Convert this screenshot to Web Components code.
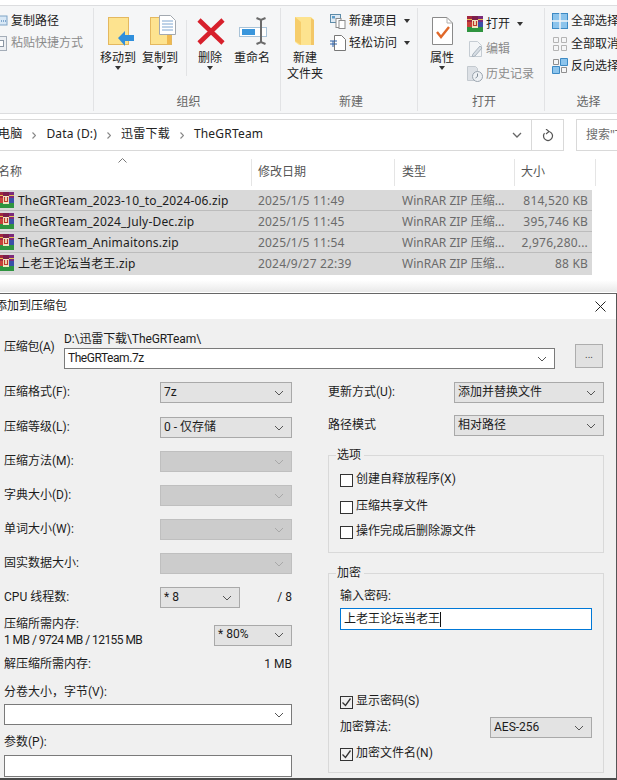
<!DOCTYPE html>
<html lang="zh">
<head>
<meta charset="utf-8">
<title>添加到压缩包</title>
<style>
  html, body { margin: 0; height: 780px; overflow: hidden; background: #fff; }
  body { font: 12px/16px "Noto Sans", "Noto Sans CJK SC", sans-serif; color: #1c1c1c; }
</style>
</head>
<body>
<explorer-ribbon></explorer-ribbon>
<address-bar></address-bar>
<file-list></file-list>
<rar-dialog></rar-dialog>

<script>
const RAR_ICON = /*html*/`
  <svg viewBox="0 0 16 16" width="16" height="16">
    <rect x="0" y="0" width="6" height="6" fill="#a3263f"/>
    <rect x="10" y="0" width="6" height="6" fill="#7b2a7c"/>
    <rect x="5" y="0" width="6" height="4" fill="#7c1f4a"/>
    <rect x="0" y="6" width="5" height="5" fill="#c8413a"/>
    <rect x="11" y="6" width="5" height="5" fill="#3b4fa8"/>
    <rect x="0" y="11" width="16" height="5" fill="#2f9440"/>
    <rect x="5" y="4" width="6" height="8" fill="#f1e4c0"/>
    <path d="M6.5 5v4.5h3V5" fill="none" stroke="#c0392b" stroke-width="1.2"/>
    <rect x="0" y="3" width="5" height="1" fill="#e6c04d"/>
    <rect x="11" y="3" width="5" height="1" fill="#e6c04d"/>
  </svg>`

class RibbonBig extends HTMLElement {
  constructor() {
    super()
    this.shadow = this.attachShadow({ mode: 'open' })
  }

  connectedCallback() {
    this.shadow.innerHTML = /*html*/`
      <style>
        :host { display: flex; flex-direction: column; align-items: center; padding-top: 7px; text-align: center; color: #222; }
        ::slotted(svg) { display: block; height: 31px; margin-bottom: 4px; }
        .caret { width: 0; height: 0; border: 3.5px solid transparent; border-top: 4px solid #333; border-bottom: 0; }
      </style>
      <slot name="icon"></slot>
      <div><slot></slot></div>
      ${this.hasAttribute('caret') ? '<div class="caret"></div>' : ''}
    `
  }
}
customElements.define('ribbon-big', RibbonBig)

class RibbonSmall extends HTMLElement {
  constructor() {
    super()
    this.shadow = this.attachShadow({ mode: 'open' })
  }

  connectedCallback() {
    this.shadow.innerHTML = /*html*/`
      <style>
        :host { display: flex; align-items: center; gap: 3px; white-space: nowrap; color: #222; height: var(--row, 22px); }
        :host([muted]) { color: #8b8b8b; }
        ::slotted(svg) { display: block; flex: none; }
        .caret { width: 0; height: 0; margin-left: 4px; border: 3.5px solid transparent; border-top: 4px solid #333; border-bottom: 0; }
      </style>
      <slot name="icon"></slot>
      <span><slot></slot></span>
      ${this.hasAttribute('caret') ? '<div class="caret"></div>' : ''}
    `
  }
}
customElements.define('ribbon-small', RibbonSmall)

class RibbonGroup extends HTMLElement {
  constructor() {
    super()
    this.shadow = this.attachShadow({ mode: 'open' })
  }

  connectedCallback() {
    this.shadow.innerHTML = /*html*/`
      <style>
        :host { display: flex; flex-direction: column; box-sizing: border-box; margin: 2px 0; border-right: 1px solid #e2e3e5; flex: none; overflow: hidden; }
        .body { display: flex; flex: 1; }
        .label { text-align: center; color: #666; padding-bottom: 1px; min-height: 16px; }
      </style>
      <div class="body"><slot></slot></div>
      <div class="label">${this.getAttribute('label') || ''}</div>
    `
  }
}
customElements.define('ribbon-group', RibbonGroup)

class ExplorerRibbon extends HTMLElement {
  constructor() {
    super()
    this.shadow = this.attachShadow({ mode: 'open' })
  }

  connectedCallback() {
    this.shadow.innerHTML = /*html*/`
      <style>
        :host { display: block; box-sizing: border-box; height: 114px; padding-top: 5px; }
        .bar { display: flex; height: 109px; box-sizing: border-box; background: #f5f6f7; border: solid #dcdddf; border-width: 1px 0; overflow: hidden; }
        .g1 { width: 94px; }
        .g2 { width: 187px; }
        .g3 { width: 137px; }
        .g4 { width: 127px; }
        .g5 { width: 80px; border-right: 0; }
        .rows { display: flex; flex-direction: column; }
        .g1 .rows, .g3 .rows, .g5 .rows { padding-top: 2px; }
        .sep { width: 1px; height: 56px; margin: 12px 5px 0; background: #e2e3e5; }
      </style>
      <div class="bar">
        <ribbon-group class="g1" label="">
          <div class="rows">
            <ribbon-small>
              <svg slot="icon" viewBox="0 0 8 16" width="8" height="16"><rect x="-6" y="3" width="13" height="9" fill="#d8e8f6" stroke="#7fa3c6"/><path d="M1 8h1M3 8h1M5 8h1" stroke="#2c6aa8"/></svg>
              复制路径
            </ribbon-small>
            <ribbon-small muted>
              <svg slot="icon" viewBox="0 0 8 16" width="8" height="16"><rect x="-6" y="1.5" width="12.5" height="14" fill="#eceff3" stroke="#a4adb8"/><rect x="-2" y="5.5" width="5.5" height="6" fill="#fff" stroke="#8a96a4"/></svg>
              粘贴快捷方式
            </ribbon-small>
          </div>
        </ribbon-group>

        <ribbon-group class="g2" label="组织" style="padding-left:3px">
          <ribbon-big caret style="width:42px">
            <svg slot="icon" viewBox="97 13 42 31" width="42">
              <rect x="108.5" y="15.5" width="20" height="27" fill="#fde38f" stroke="#e4b85f"/>
              <path d="M118 36l7-7v4h9v6h-9v5z" fill="#2f8fdc"/>
            </svg>
            移动到
          </ribbon-big>
          <ribbon-big caret style="width:42px">
            <svg slot="icon" viewBox="139 13 42 31" width="42">
              <rect x="150.5" y="15.5" width="21" height="27" fill="#fde38f" stroke="#e4b85f"/>
              <rect x="167" y="32" width="4" height="10" fill="#f0b94f"/>
              <path d="M159.5 13.5h11l5 5v14h-16z" fill="#fff" stroke="#a3a9b0"/>
              <path d="M162 19h11M162 22h11M162 25h11M162 28h11" stroke="#7ea6d0"/>
            </svg>
            复制到
          </ribbon-big>
          <div class="sep"></div>
          <ribbon-big caret style="width:36px">
            <svg slot="icon" viewBox="192 13 36 31" width="36">
              <path d="M199 18l24 23M223 18l-24 23" stroke="#d7202c" stroke-width="4.6" fill="none"/>
            </svg>
            删除
          </ribbon-big>
          <ribbon-big style="width:40px;margin-left:4px">
            <svg slot="icon" viewBox="232 13 40 31" width="40">
              <rect x="239.5" y="25.5" width="27" height="9" fill="#fff" stroke="#a9c3d8"/>
              <rect x="242" y="27" width="13" height="6" fill="#3a96dc"/>
              <path d="M261 17v24M256.500 16l4.500 2l4.500-2M256.500 42l4.500-2l4.500 2" fill="none" stroke="#6b6b6b" stroke-width="2"/>
            </svg>
            重命名
          </ribbon-big>
        </ribbon-group>

        <ribbon-group class="g3" label="新建" style="padding-left:4px">
          <ribbon-big style="width:40px">
            <svg slot="icon" viewBox="285 13 40 31" width="40">
              <path d="M295 15h16l3 3v25h-15l-4-3z" fill="#fde38f"/>
              <path d="M295 15l6 5v23l-6-4z" fill="#f6cd6b"/>
              <path d="M311 16l3 2v25h-3z" fill="#f3c767"/>
            </svg>
            新建<br>文件夹
          </ribbon-big>
          <div class="rows" style="margin-left:5px">
            <ribbon-small caret>
              <svg slot="icon" viewBox="0 0 16 16" width="16" height="16">
                <rect x="0.500" y="1.500" width="10" height="8" fill="#dfeaf3" stroke="#5d8ba8"/>
                <rect x="2" y="3" width="3" height="2.500" fill="#5d9cc8"/>
                <rect x="6" y="5.500" width="5" height="9" fill="#fff" stroke="#8c8c8c"/>
                <rect x="9" y="7.500" width="6" height="8" fill="#fff" stroke="#8c8c8c"/>
              </svg>
              新建项目
            </ribbon-small>
            <ribbon-small caret>
              <svg slot="icon" viewBox="0 0 16 16" width="16" height="16">
                <path d="M4.500 0.500h7l4 4v11h-11z" fill="#fff" stroke="#777"/>
                <path d="M0 6h7M0 9h7M3 6v6" stroke="#2f63a8" fill="none"/>
              </svg>
              轻松访问
            </ribbon-small>
          </div>
        </ribbon-group>

        <ribbon-group class="g4" label="打开" style="padding-left:6px;--row:25px">
          <ribbon-big caret style="width:36px">
            <svg slot="icon" viewBox="424 13 36 31" width="36">
              <path d="M432.500 15.500h14.500l5.500 5.500v21.500h-20z" fill="#fff" stroke="#8a8a8a"/>
              <path d="M447 15.500v5.500h5.500" fill="none" stroke="#b0b0b0"/>
              <path d="M437 30l4 5 8-10" fill="none" stroke="#e0682a" stroke-width="2.400"/>
            </svg>
            属性
          </ribbon-big>
          <div class="rows" style="margin:3px 0 0 7px">
            <ribbon-small caret>
              <span slot="icon" style="display:block;height:16px">${RAR_ICON}</span>
              打开
            </ribbon-small>
            <ribbon-small muted>
              <svg slot="icon" viewBox="0 0 16 16" width="16" height="16">
                <path d="M2.500 0.500h8l4 4v11h-12z" fill="#f3f5f7" stroke="#c5ccd3"/>
                <path d="M6 13l7-8 2 2-7 8-3 1z" fill="#d6dde4" stroke="#aab4be"/>
              </svg>
              编辑
            </ribbon-small>
            <ribbon-small muted>
              <svg slot="icon" viewBox="0 0 16 16" width="16" height="16">
                <path d="M0.500 0.500h8l2 2v12h-10z" fill="#dde1e6" stroke="#c3c9cf"/>
                <circle cx="10.500" cy="10.500" r="5" fill="#eef1f4" stroke="#9aa4ae"/>
                <path d="M10.500 7.500v3l-2 1.500" fill="none" stroke="#7f8a95"/>
              </svg>
              历史记录
            </ribbon-small>
          </div>
        </ribbon-group>

        <ribbon-group class="g5" label="选择" style="padding-left:7px;--row:22.500px">
          <div class="rows">
            <ribbon-small>
              <svg slot="icon" viewBox="0 0 16 16" width="16" height="16">
                <rect x="0.500" y="0.500" width="15" height="15" fill="#8cc4ec" stroke="#3d8ac4"/>
                <path d="M8 0v16M0 8h16" stroke="#f5f6f7" stroke-width="1.400"/>
              </svg>
              全部选择
            </ribbon-small>
            <ribbon-small>
              <svg slot="icon" viewBox="0 0 16 16" width="16" height="16">
                <path d="M1.500 1.500h5v5h-5zM9.500 1.500h5v5h-5zM1.500 9.500h5v5h-5zM9.500 9.500h5v5h-5z" fill="none" stroke="#b4b4b4"/>
              </svg>
              全部取消
            </ribbon-small>
            <ribbon-small>
              <svg slot="icon" viewBox="0 0 16 16" width="16" height="16">
                <path d="M1.500 1.500h5v5h-5zM9.500 9.500h5v5h-5z" fill="none" stroke="#8f8f8f"/>
                <path d="M8.500 0.500h7v7h-7zM0.500 8.500h7v7h-7z" fill="#8cc4ec" stroke="#3d8ac4"/>
              </svg>
              反向选择
            </ribbon-small>
          </div>
        </ribbon-group>
      </div>
    `
  }
}
customElements.define('explorer-ribbon', ExplorerRibbon)

class AddressBar extends HTMLElement {
  constructor() {
    super()
    this.shadow = this.attachShadow({ mode: 'open' })
  }

  connectedCallback() {
    this.shadow.innerHTML = /*html*/`
      <style>
        :host { display: flex; height: 32px; margin-top: 5px; box-sizing: border-box; color: #222; }
        .path { display: flex; align-items: center; width: 565px; margin-left: -1px; box-sizing: border-box; border: 1px solid #d9d9d9; }
        .crumbs { flex: 1; display: flex; align-items: center; white-space: nowrap; margin-left: -2px; padding-bottom: 2px; letter-spacing: .2px; }
        .crumbs svg { margin: 2px 10px 0 10px; }
        .drop { width: 29px; height: 100%; display: flex; align-items: center; justify-content: center; }
        .refresh { width: 31px; height: 100%; display: flex; align-items: center; justify-content: center; border-left: 1px solid #d9d9d9; }
        .search { flex: 1; margin-left: 12px; border: 1px solid #d9d9d9; border-right: 0; padding-left: 9px; line-height: 30px; color: #6d6d6d; white-space: nowrap; overflow: hidden; }
      </style>
      <div class="path">
        <div class="crumbs">
          <span>电脑</span>${this.arrow()}<span>Data (D:)</span>${this.arrow()}<span>迅雷下载</span>${this.arrow()}<span>TheGRTeam</span>
        </div>
        <div class="drop"><svg width="10" height="6" viewBox="0 0 10 6"><path d="M1 1l4 4 4-4" fill="none" stroke="#666" stroke-width="1.300"/></svg></div>
        <div class="refresh"><svg width="12" height="13" viewBox="0 0 12 13"><path d="M6 2.500a4.500 4.500 0 1 1-3.500 1.700" fill="none" stroke="#555" stroke-width="1.200"/><path d="M4 0l3 2.500L4 5" fill="none" stroke="#555" stroke-width="1.100"/></svg></div>
      </div>
      <div class="search">搜索"T</div>
    `
  }

  arrow() {
    return '<svg width="4" height="7" viewBox="0 0 4 7"><path d="M.5.500l3 3-3 3" fill="none" stroke="#888" stroke-width="1.200"/></svg>'
  }
}
customElements.define('address-bar', AddressBar)

class FileRow extends HTMLElement {
  constructor() {
    super()
    this.shadow = this.attachShadow({ mode: 'open' })
  }

  connectedCallback() {
    this.shadow.innerHTML = /*html*/`
      <style>
        :host { display: grid; grid-template-columns: 252px 144px 121px 75px; width: 592px; height: 21px; background: #d9d9d9; border-bottom: 1px solid #bcbcbc; box-sizing: border-box; line-height: 22px; white-space: nowrap; letter-spacing: .19px; }
        :host(:last-child) { border-bottom: 0; height: 22px; }
        .name { display: flex; gap: 4px; margin-left: -2px; color: #1c1c1c; }
        svg { display: block; margin-top: 2px; flex: none; }
        .date { padding-left: 6px; color: #6b6b6b; }
        .type { padding-left: 6px; color: #6b6b6b; letter-spacing: 0; }
        .size { text-align: right; padding-right: 4px; color: #6b6b6b; }
      </style>
      <div class="name">${RAR_ICON}<span><slot></slot></span></div>
      <div class="date">${this.getAttribute('date')}</div>
      <div class="type">WinRAR ZIP 压缩...</div>
      <div class="size">${this.getAttribute('size')}</div>
    `
  }
}
customElements.define('file-row', FileRow)

class FileList extends HTMLElement {
  constructor() {
    super()
    this.shadow = this.attachShadow({ mode: 'open' })
  }

  connectedCallback() {
    this.shadow.innerHTML = /*html*/`
      <style>
        :host { display: block; height: 142px; }
        .head { position: relative; display: grid; grid-template-columns: 252px 143px 120px 81px; width: 597px; height: 39px; align-items: center; color: #555; }
        .head div { height: 27px; line-height: 25px; margin-top: 4px; border-right: 1px solid #e5e5e5; padding-left: 6px; }
        .head div:first-child { padding-left: 0; margin-left: -2px; }
        .head div:nth-child(3) { padding-left: 7px; }
        .sort { position: absolute; left: 118px; top: 7px; }
        .fade { height: 17px; background: linear-gradient(#fff 0, #fff 30%, #e9e9e9 100%); }
      </style>
      <div class="head">
        <div>名称</div><div>修改日期</div><div>类型</div><div>大小</div>
        <svg class="sort" width="9" height="5" viewBox="0 0 9 5"><path d="M.5 4.500l4-4 4 4" fill="none" stroke="#777"/></svg>
      </div>
      <div class="rows">
        <file-row date="2025/1/5 11:49" size="814,520 KB">TheGRTeam_2023-10_to_2024-06.zip</file-row>
        <file-row date="2025/1/5 11:45" size="395,746 KB">TheGRTeam_2024_July-Dec.zip</file-row>
        <file-row date="2025/1/5 11:54" size="2,976,280...">TheGRTeam_Animaitons.zip</file-row>
        <file-row date="2024/9/27 22:39" size="88 KB">上老王论坛当老王.zip</file-row>
      </div>
      <div class="fade"></div>
    `
  }
}
customElements.define('file-list', FileList)

class WinSelect extends HTMLElement {
  constructor() {
    super()
    this.shadow = this.attachShadow({ mode: 'open' })
  }

  connectedCallback() {
    this.shadow.innerHTML = /*html*/`
      <style>
        :host { display: flex; align-items: center; box-sizing: border-box; height: 21px; background: #e3e3e3; border: 1px solid #a9a9a9; padding: 0 7px 0 3px; white-space: nowrap; }
        :host([white]) { background: #fff; border-color: #7a7a7a; }
        :host([disabled]) { background: #cccccc; border-color: #bfbfbf; }
        span { flex: 1; min-width: 0; padding-bottom: 2px; }
        svg { display: block; stroke: #555; }
        :host([disabled]) svg { stroke: #a8a8a8; }
      </style>
      <span><slot></slot></span>
      <svg width="10" height="6" viewBox="0 0 10 6"><path d="M1 1l4 4 4-4" fill="none" stroke-width="1"/></svg>
    `
  }
}
customElements.define('win-select', WinSelect)

class WinCheck extends HTMLElement {
  constructor() {
    super()
    this.shadow = this.attachShadow({ mode: 'open' })
  }

  connectedCallback() {
    this.shadow.innerHTML = /*html*/`
      <style>
        :host { display: flex; align-items: center; gap: 3px; height: 16px; }
        .box { width: 13px; height: 13px; box-sizing: border-box; border: 1px solid #333; background: #fff; }
        :host([checked]) .box { background: #f0f0f0; }
        svg { display: block; }
        span { padding-bottom: 2px; }
      </style>
      <div class="box">${this.hasAttribute('checked') ? '<svg width="11" height="11" viewBox="0 0 11 11"><path d="M1.500 5.500l3 3 5-7" fill="none" stroke="#333" stroke-width="1.300"/></svg>' : ''}</div>
      <span><slot></slot></span>
    `
  }
}
customElements.define('win-check', WinCheck)

class WinGroup extends HTMLElement {
  constructor() {
    super()
    this.shadow = this.attachShadow({ mode: 'open' })
  }

  connectedCallback() {
    this.shadow.innerHTML = /*html*/`
      <style>
        :host { display: block; box-sizing: border-box; border: 1px solid #d9d9d9; padding: 0 11px; }
        .legend { width: fit-content; margin: -9px 0 0 -4px; padding: 0 3px 2px 1px; height: 14px; background: #f0f0f0; }
      </style>
      <div class="legend">${this.getAttribute('label')}</div>
      <slot></slot>
    `
  }
}
customElements.define('win-group', WinGroup)

class RarDialog extends HTMLElement {
  constructor() {
    super()
    this.shadow = this.attachShadow({ mode: 'open' })
  }

  connectedCallback() {
    this.shadow.innerHTML = /*html*/`
      <style>
        :host { display: block; box-sizing: border-box; height: 488px; background: #f0f0f0; border-top: 1px solid #666; border-right: 1px solid #555; border-bottom: 3px solid #4a4a4a; overflow: hidden; font-family: Roboto, "Noto Sans CJK SC", sans-serif; }
        .title { display: flex; align-items: center; justify-content: space-between; height: 25px; background: #fff; padding-right: 10px; }
        .title span { margin-left: -5px; padding-bottom: 2px; }
        .title svg { display: block; }
        .top { display: grid; grid-template-columns: 60px 491px 28px; padding: 12px 0 0 4px; height: 63px; box-sizing: border-box; }
        .top .lab { margin-top: 8px; letter-spacing: -.3px; }
        .path { height: 16px; letter-spacing: -.1px; }
        .combo { padding-left: 3px; letter-spacing: -.45px; }
        .more { grid-column: 3; width: 28px; height: 24px; margin: 13px 0 0 20px; box-sizing: border-box; background: #e1e1e1; border: 1px solid #adadad; text-align: center; line-height: 20px; font-size: 10px; color: #444; }
        .cols { display: flex; padding-left: 4px; }
        .left { width: 288px; flex: none; }
        .right { width: 276px; flex: none; margin-left: 36px; }
        .row { display: flex; align-items: center; justify-content: space-between; height: 21px; margin-bottom: 13px; white-space: nowrap; }
        .row > span { padding-bottom: 2px; }
        .left .row:first-child { margin-bottom: 14px; }
        .left win-select { width: 132px; }
        .left win-select.cpu { width: 80px; margin-right: 52px; }
        .cpu-row { position: relative; }
        .of { position: absolute; right: 0; }
        .mem { height: 32px; margin: -4px 0 5px; }
        .mem small { font-size: inherit; letter-spacing: -.55px; }
        .left win-select.memsel { width: 78px; margin-top: 4px; }
        .dec { margin-bottom: 9px; }
        .cap { height: 16px; margin-bottom: 4px; }
        .left win-select.wide { width: 288px; margin-bottom: 9px; }
        .input { height: 22px; box-sizing: border-box; background: #fff; border: 1px solid #7a7a7a; }
        .right .row { margin-bottom: 12px; }
        .right win-select { width: 150px; }
        .opts { height: 98px; margin-top: 19px; }
        .opts win-check:nth-of-type(1) { margin-top: 9px; }
        .opts win-check:nth-of-type(2) { margin-top: 11px; }
        .opts win-check:nth-of-type(3) { margin-top: 9px; }
        .enc { height: 200px; margin-top: 20px; }
        .enc .pl { margin-top: 7px; }
        .pass { display: flex; align-items: center; width: 252px; height: 22px; margin-top: 4px; box-sizing: border-box; background: #fff; border: 1px solid #0078d7; padding-left: 3px; white-space: nowrap; }
        .caret { width: 1px; height: 15px; background: #111; }
        .enc .show { margin-top: 64px; }
        .right .algo { margin: 7px 0 8px; }
        .right .algo win-select { width: 102px; }
      </style>
      <div class="title">
        <span>添加到压缩包</span>
        <svg width="11" height="11" viewBox="0 0 11 11"><path d="M.5.500l10 10M10.500.500l-10 10" stroke="#222" fill="none"/></svg>
      </div>
      <div class="top">
        <div class="lab">压缩包(A)</div>
        <div>
          <div class="path">D:\\迅雷下载\\TheGRTeam\\</div>
          <win-select white class="combo" style="margin-top:1px">TheGRTeam.7z</win-select>
        </div>
        <div class="more">...</div>
      </div>
      <div class="cols">
        <div class="left">
          <div class="row"><span>压缩格式(F):</span><win-select>7z</win-select></div>
          <div class="row"><span>压缩等级(L):</span><win-select>0 - 仅存储</win-select></div>
          <div class="row"><span>压缩方法(M):</span><win-select disabled></win-select></div>
          <div class="row"><span>字典大小(D):</span><win-select disabled></win-select></div>
          <div class="row"><span>单词大小(W):</span><win-select disabled></win-select></div>
          <div class="row"><span>固实数据大小:</span><win-select disabled></win-select></div>
          <div class="row cpu-row"><span>CPU 线程数:</span><win-select class="cpu">* 8</win-select><span class="of">/ 8</span></div>
          <div class="row mem"><span>压缩所需内存:<br><small>1 MB / 9724 MB / 12155 MB</small></span><win-select class="memsel">* 80%</win-select></div>
          <div class="row dec"><span>解压缩所需内存:</span><span>1 MB</span></div>
          <div class="cap">分卷大小，字节(V):</div>
          <win-select white class="wide"></win-select>
          <div class="cap" style="margin-bottom:5px">参数(P):</div>
          <div class="input"></div>
        </div>
        <div class="right">
          <div class="row"><span>更新方式(U):</span><win-select>添加并替换文件</win-select></div>
          <div class="row"><span>路径模式</span><win-select>相对路径</win-select></div>
          <win-group class="opts" label="选项">
            <win-check>创建自释放程序(X)</win-check>
            <win-check>压缩共享文件</win-check>
            <win-check>操作完成后删除源文件</win-check>
          </win-group>
          <win-group class="enc" label="加密">
            <div class="pl">输入密码:</div>
            <div class="pass">上老王论坛当老王<div class="caret"></div></div>
            <win-check checked class="show">显示密码(S)</win-check>
            <div class="row algo"><span>加密算法:</span><win-select>AES-256</win-select></div>
            <win-check checked>加密文件名(N)</win-check>
          </win-group>
        </div>
      </div>
    `
  }
}
customElements.define('rar-dialog', RarDialog)
</script>
</body>
</html>
